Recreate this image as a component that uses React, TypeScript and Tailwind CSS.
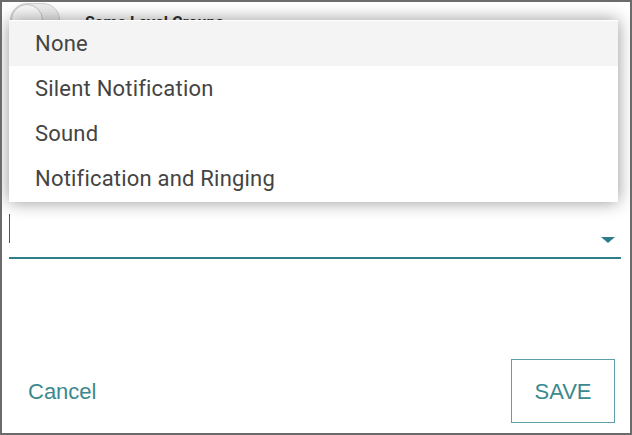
import { useState } from "react";

const OPTIONS = ["None", "Silent Notification", "Sound", "Notification and Ringing"];

function Toggle() {
  return (
    <div className="relative h-[34px] w-[50px] shrink-0 rounded-full border border-[#cfcfcf] bg-[#ececec]">
      <div className="absolute left-0 top-0 h-[32px] w-[32px] rounded-full border border-[#c4c4c4] bg-[#f7f7f7]" />
    </div>
  );
}

function MenuList({ selected }: { selected: string }) {
  return (
    <ul className="absolute left-[7px] top-[18px] z-10 w-[609px] bg-white py-px shadow-[0_0_16px_rgba(0,0,0,0.42)]">
      {OPTIONS.map((option) => (
        <li
          key={option}
          className={`flex h-[45px] items-center pl-[26px] font-['Roboto',sans-serif] text-[22px] tracking-[0.2px] text-[#444] ${
            option === selected ? "bg-[#f4f4f4]" : ""
          }`}
        >
          {option}
        </li>
      ))}
    </ul>
  );
}

export default function App() {
  const [selected] = useState("None");

  return (
    <div className="relative h-[435px] w-[632px] overflow-hidden border-2 border-[#6b6b6b] bg-white">
      <div className="flex h-full flex-col">
        {/* background row, mostly covered by the open menu */}
        <div className="flex items-start gap-[25px] pl-[8px] pt-[1px]">
          <Toggle />
          <span className="pt-[8px] font-['Roboto',sans-serif] text-[16px] font-bold text-[#333]">
            Same Level Groups
          </span>
        </div>

        <div className="mr-[9px] ml-[7px] mt-[146px] flex flex-col">
          <label className="font-['Roboto',sans-serif] text-[15px] text-[#777]">Notification Type</label>
          <div className="mt-[4px] flex h-[49px] items-start justify-between border-b-2 border-[#2e7f8a]">
            <span className="mt-[4px] h-[29px] w-px bg-[#555]" />
            <svg width="16" height="8" viewBox="0 0 16 8" className="mr-[5px] mt-[26px]">
              <path d="M1 1h14L8 7z" fill="#2e7d8a" />
            </svg>
          </div>
        </div>

        <div className="mt-auto mb-[10px] mr-[15px] flex items-center justify-between pl-[26px]">
          <button className="font-['Liberation_Sans',Arial,sans-serif] text-[22px] text-[#3b898e]">Cancel</button>
          <button className="flex h-[64px] w-[104px] items-center justify-center border border-[#5c9fa8] font-['Liberation_Sans',Arial,sans-serif] text-[22px] text-[#3b898e]">
            SAVE
          </button>
        </div>
      </div>

      <MenuList selected={selected} />
    </div>
  );
}
